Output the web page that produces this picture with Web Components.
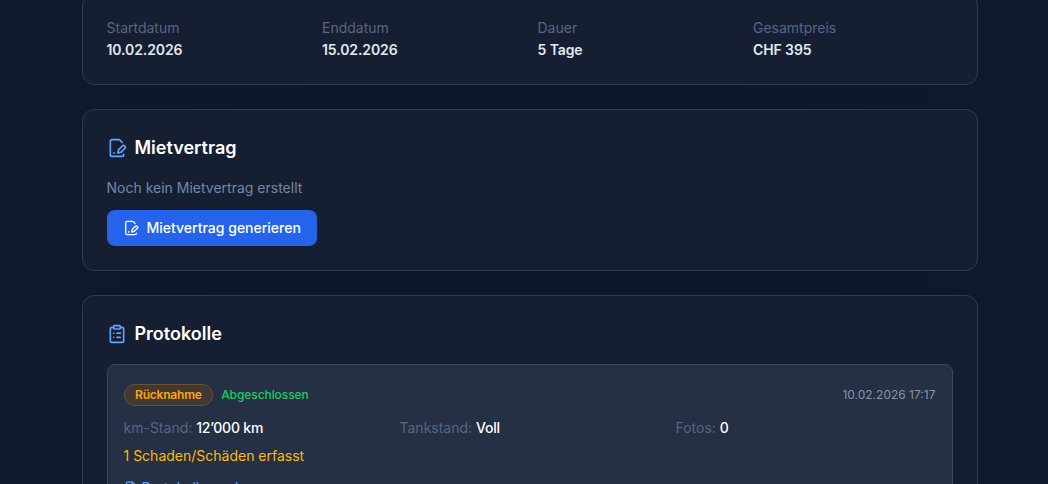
<!DOCTYPE html>
<html lang="de">
<head>
<meta charset="utf-8">
<title>Buchung</title>
<style>
html,body{margin:0;padding:0;height:484px;overflow:hidden;}
body{background:linear-gradient(90deg,#0e192b 0%,#0e162a 50%,#0e192b 100%);font-family:Inter,"Liberation Sans",sans-serif;}
</style>
</head>
<body>
<booking-page>
    <detail-card>
        <div style="display:grid;grid-template-columns:repeat(4,1fr);gap:16px">
            <info-field label="Startdatum" value="10.02.2026"></info-field>
            <info-field label="Enddatum" value="15.02.2026"></info-field>
            <info-field label="Dauer" value="5 Tage"></info-field>
            <info-field label="Gesamtpreis" value="CHF 395"></info-field>
        </div>
    </detail-card>
    <detail-card heading="Mietvertrag" icon="pen">
        <contract-empty></contract-empty>
    </detail-card>
    <detail-card heading="Protokolle" icon="clipboard">
        <protocol-item></protocol-item>
    </detail-card>
</booking-page>

<script>
const icons = {
    pen: `<path d="m18.226 5.226-2.52-2.52A2.4 2.4 0 0 0 14.012 2H6a2 2 0 0 0-2 2v16a2 2 0 0 0 2 2h12a2 2 0 0 0 2-2v-.351"/><path d="M21.378 12.626a1 1 0 0 0-3.004-3.004l-4.01 4.012a2 2 0 0 0-.506.854l-.837 2.87a.5.5 0 0 0 .62.62l2.87-.837a2 2 0 0 0 .854-.506z"/><path d="M8 18h1"/>`,
    clipboard: `<rect x="8" y="2" width="8" height="4" rx="1"/><path d="M16 4h2a2 2 0 0 1 2 2v14a2 2 0 0 1-2 2H6a2 2 0 0 1-2-2V6a2 2 0 0 1 2-2h2"/><path d="M12 11h4"/><path d="M12 16h4"/><path d="M8 11h.01"/><path d="M8 16h.01"/>`,
    file: `<path d="M15 2H6a2 2 0 0 0-2 2v16a2 2 0 0 0 2 2h12a2 2 0 0 0 2-2V7Z"/><path d="M14 2v4a2 2 0 0 0 2 2h4"/><path d="M10 9H8"/><path d="M16 13H8"/><path d="M16 17H8"/>`
};

function svgIcon(name, size){
    return `<svg width="${size}" height="${size}" viewBox="0 0 24 24" fill="none" stroke="currentColor" stroke-width="2" stroke-linecap="round" stroke-linejoin="round">${icons[name]}</svg>`;
}

class BookingPage extends HTMLElement {
    constructor(){
        super();
        this.attachShadow({mode:'open'});
        this.shadowRoot.innerHTML = `
        <style>
        :host{display:flex;flex-direction:column;gap:24px;width:896px;margin:-7px 0 0 81.5px;}
        </style>
        <slot></slot>`;
    }
}

class DetailCard extends HTMLElement {
    constructor(){
        super();
        this.attachShadow({mode:'open'});
        const heading = this.getAttribute('heading');
        const head = heading ? `<h2>${svgIcon(this.getAttribute('icon'), 20)}<span>${heading}</span></h2>` : '';
        this.shadowRoot.innerHTML = `
        <style>
        :host{display:block;box-sizing:border-box;padding:24px;background:#161f32;border:1px solid #2e3a4e;border-radius:12px;}
        h2{display:flex;align-items:center;gap:8px;margin:0 0 16px;font-size:18px;line-height:28px;font-weight:600;color:#fff;}
        svg{color:#60a5fa;flex:none;}
        </style>
        ${head}<slot></slot>`;
    }
}

class InfoField extends HTMLElement {
    constructor(){
        super();
        this.attachShadow({mode:'open'});
        this.shadowRoot.innerHTML = `
        <style>
        :host{display:block;font-size:14px;line-height:20px;}
        .label{color:#566683;margin-bottom:2px;}
        .value{color:#e2e8f0;font-weight:600;letter-spacing:-.1px;}
        </style>
        <div class="label">${this.getAttribute('label')}</div>
        <div class="value">${this.getAttribute('value')}</div>`;
    }
}

class ContractEmpty extends HTMLElement {
    constructor(){
        super();
        this.attachShadow({mode:'open'});
        this.shadowRoot.innerHTML = `
        <style>
        :host{display:block;}
        p{margin:0 0 12px;font-size:14px;line-height:20px;color:#7487a3;}
        button{display:inline-flex;align-items:center;gap:8px;height:36px;padding:0 16px;border:0;border-radius:8px;background:#2563eb;color:#fff;font:500 14px/20px Inter,"Liberation Sans",sans-serif;}
        </style>
        <p>Noch kein Mietvertrag erstellt</p>
        <button>${svgIcon('pen', 16)}<span>Mietvertrag generieren</span></button>`;
    }
}

class ProtocolItem extends HTMLElement {
    constructor(){
        super();
        this.attachShadow({mode:'open'});
        this.shadowRoot.innerHTML = `
        <style>
        :host{display:block;box-sizing:border-box;padding:19px 16px 16px;background:#253044;border:1px solid #3b4658;border-radius:8px;font-size:14px;line-height:20px;}
        .top{display:flex;justify-content:space-between;align-items:center;margin-bottom:12px;}
        .tags{display:flex;align-items:center;gap:8px;}
        .badge{padding:2px 10.5px;border:1px solid #6b5230;border-radius:9999px;background:#41392f;color:#fba512;font-size:12px;line-height:16px;font-weight:600;letter-spacing:-.2px;}
        .state{color:#1ccb63;font-size:12px;line-height:16px;font-weight:500;letter-spacing:-.08px;}
        .time{color:#8494ad;font-size:12px;line-height:16px;}
        .grid{display:grid;grid-template-columns:repeat(3,1fr);gap:16px;}
        .grid span{color:#566683;}
        .grid b{color:#fff;font-weight:500;letter-spacing:-.2px;}
        .damage{margin-top:8px;color:#fbb911;}
        a{display:inline-flex;align-items:center;gap:4px;margin-top:12px;color:#60a5fa;}
        </style>
        <div class="top">
            <div class="tags"><span class="badge">Rücknahme</span><span class="state">Abgeschlossen</span></div>
            <span class="time">10.02.2026 17:17</span>
        </div>
        <div class="grid">
            <div><span>km-Stand:</span> <b>12’000 km</b></div>
            <div><span>Tankstand:</span> <b>Voll</b></div>
            <div><span>Fotos:</span> <b>0</b></div>
        </div>
        <div class="damage">1 Schaden/Schäden erfasst</div>
        <a>${svgIcon('file', 14)}<span>Protokoll ansehen</span></a>`;
    }
}

customElements.define('booking-page', BookingPage);
customElements.define('detail-card', DetailCard);
customElements.define('info-field', InfoField);
customElements.define('contract-empty', ContractEmpty);
customElements.define('protocol-item', ProtocolItem);
</script>
</body>
</html>
